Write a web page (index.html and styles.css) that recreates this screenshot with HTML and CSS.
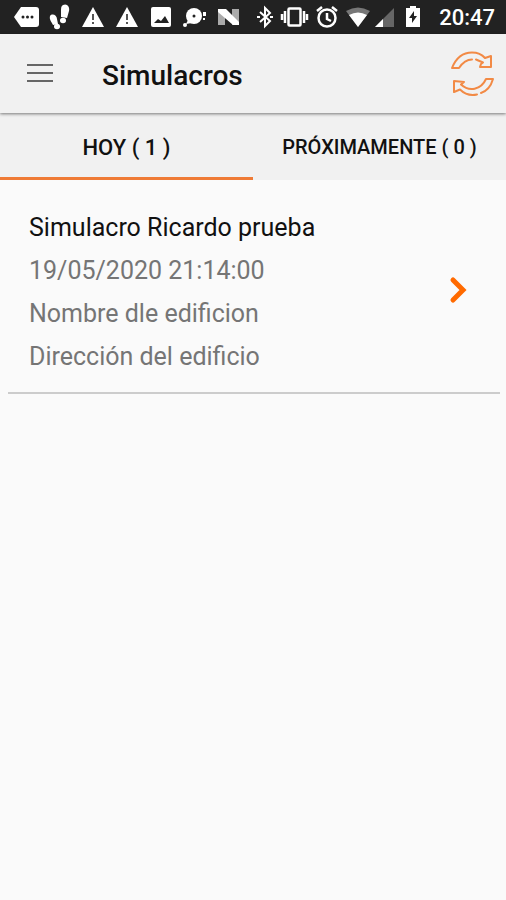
FILE: index.html
```html
<!DOCTYPE html>
<html lang="es">
<head>
    <meta charset="UTF-8">
    <meta name="viewport" content="width=device-width, initial-scale=1.0">
    <title>Simulacros</title>
    <link rel="stylesheet" href="styles.css">
</head>
<body>

    <div class="status-bar">
        <div class="notifications">
            <svg width="24" height="24" viewBox="0 0 24 24"><path d="M7 2h15q3 0 3 3v14q0 3-3 3H7L0 12z"/><g fill="#222"><circle cx="9" cy="12" r="1.500"/><circle cx="13.500" cy="12" r="1.500"/><circle cx="18" cy="12" r="1.500"/></g></svg>
            <svg width="24" height="24" viewBox="0 0 24 24"><path d="M2 11c2-3 7-1 7 3l1 5-5 1c-1-3-4-5-3-9z"/><ellipse cx="9" cy="21.500" rx="3" ry="2.700"/><path d="M15 0c4-2 7 2 6 6l-2 7-6-1V6c0-3 0-5 2-6z"/><ellipse cx="15" cy="15.500" rx="3" ry="2.700"/></svg>
            <svg width="24" height="24" viewBox="0 0 24 24"><path d="M11 2l11 20H0z"/><path d="M10 9h2v6h-2zM10 17h2v2h-2z" fill="#555"/></svg>
            <svg width="24" height="24" viewBox="0 0 24 24"><path d="M11 2l11 20H0z"/><path d="M10 9h2v6h-2zM10 17h2v2h-2z" fill="#555"/></svg>
            <svg width="24" height="24" viewBox="0 0 24 24"><rect x="1" y="2" width="20" height="20" rx="2"/><path d="M4 18l4-4 3 2 4-5 4 7z" fill="#222"/></svg>
            <svg width="24" height="24" viewBox="0 0 24 24"><circle cx="10" cy="11" r="8"/><circle cx="1" cy="20" r="2"/><path d="M2 19l2-4 4 3z"/><path d="M19 7h3v4h-3zM19 13h2v2h-2z"/><circle cx="10" cy="11" r="1.500" fill="#222"/></svg>
            <svg width="24" height="24" viewBox="0 0 24 24"><path d="M0 4h7v16H0zM14 4h7v16h-7z" fill="#aaa"/><path d="M0 4h8l13 13v3h-6L0 7z"/></svg>
        </div>
        <div class="system">
            <svg width="24" height="24" viewBox="0 0 24 24"><path d="M8 7l10 9-5 5V3l5 5-10 9" fill="none" stroke="#fff" stroke-width="2"/><path d="M5 11h3v2H5zM18 11h3v2h-3z"/></svg>
            <svg width="30" height="24" viewBox="0 0 30 24"><g fill="none" stroke="#fff" stroke-width="2.500"><rect x="8.500" y="3.500" width="12" height="17" rx="1"/><path d="M5 6v12M24 6v12M2 9v6M27 9v6"/></g></svg>
            <svg width="24" height="24" viewBox="0 0 24 24"><g fill="none" stroke="#fff" stroke-width="2.500"><circle cx="13" cy="13" r="8.500"/><path d="M13 8v6l4 2M3 6l5-4M23 6l-5-4"/></g></svg>
            <svg width="28" height="24" viewBox="0 0 28 24"><path d="M4 6q12-7 24 0L16 22z" fill="#777"/><path d="M7 10q9-5 18 0l-9 12z"/></svg>
            <svg width="22" height="24" viewBox="0 0 22 24"><path d="M20 3v19H1z" fill="#666"/><path d="M9 14v8H1z"/></svg>
            <svg width="24" height="24" viewBox="0 0 24 24"><path d="M10 1h6v2h4v19H6V3h4z"/><path d="M14 6l-5 7h3v5l5-7h-3z" fill="#222"/></svg>
            <time class="clock">20:47</time>
        </div>
    </div>

    <header class="toolbar">
        <button class="menu-btn" aria-label="Menú">
            <svg width="28" height="24" viewBox="0 0 28 24"><path d="M1 3h26M1 11h26M1 19h26" stroke="#666" stroke-width="2"/></svg>
        </button>
        <h1>Simulacros</h1>
        <button class="refresh-btn" aria-label="Actualizar">
            <svg width="44" height="46" viewBox="0 0 44 46" fill="none" stroke="#f28a45" stroke-width="2" stroke-linejoin="round" stroke-linecap="round">
                <path d="M21 8.500c-6 0-10 4-13 8.500H1C5 7 12 1.500 21 1.500c5 0 10 2 13 5.500l6-2v11H29l1-3 2-1.500-7-3"/>
                <path d="M26 43.500c-7 1.500-13-1-17-5L3 41V30l10 1-3 2.500C18 41 30 39 35 28h7c-2 7-6 12-12 14"/>
            </svg>
        </button>
    </header>

    <nav class="tabs">
        <button class="tab active">HOY ( 1 )</button>
        <button class="tab small">PRÓXIMAMENTE ( 0 )</button>
    </nav>

    <main>
        <a class="drill" href="#">
            <div class="drill-info">
                <h2>Simulacro Ricardo prueba</h2>
                <p>19/05/2020 21:14:00</p>
                <p>Nombre dle edificion</p>
                <p>Dirección del edificio</p>
            </div>
            <svg width="18" height="28" viewBox="0 0 18 28"><path d="M4 4l10 10L4 24" fill="none" stroke="#ff6a00" stroke-width="5" stroke-linecap="round"/></svg>
        </a>
    </main>

</body>
</html>
```
FILE: styles.css
```css
* {
    margin: 0;
    padding: 0;
    box-sizing: border-box;
    font-family: Roboto, "Liberation Sans", sans-serif;
}

body {
    background: #fafafa;
    color: #111;
}

button {
    background: none;
    border: none;
    cursor: pointer;
    color: inherit;
}

svg {
    display: block;
    flex-shrink: 0;
}

/* Barra de estado */
.status-bar {
    display: flex;
    justify-content: space-between;
    align-items: center;
    height: 34px;
    padding: 0 11px 0 14px;
    background: #222;
    color: #fff;
}

.status-bar svg {
    fill: #fff;
    overflow: visible;
}

.notifications {
    display: flex;
    gap: 10px;
}

.system {
    display: flex;
    align-items: center;
    gap: 4px;
}

.clock {
    margin-left: 11px;
    padding-top: 2px;
    font-size: 22px;
    font-weight: 500;
    line-height: 24px;
}

/* Cabecera */
.toolbar {
    position: relative;
    display: flex;
    align-items: center;
    height: 79px;
    padding: 0 11px 0 26px;
    background: #f1f1f1;
    box-shadow: 0 1px 3px rgba(0, 0, 0, 0.5);
}

.toolbar h1 {
    flex: 1;
    margin-left: 48px;
    padding-top: 4px;
    font-size: 28px;
    font-weight: 500;
    line-height: 32px;
}

/* Pestañas */
.tabs {
    display: grid;
    grid-template-columns: 1fr 1fr;
    background: #f1f1f1;
}

.tab {
    height: 67px;
    padding-top: 4px;
    border-bottom: 3px solid transparent;
    font-size: 22px;
    font-weight: 500;
}

.tab.active {
    border-bottom-color: #ef7b36;
}

.tab.small {
    font-size: 20px;
}

/* Lista */
.drill {
    display: flex;
    align-items: center;
    justify-content: space-between;
    margin: 0 6px 0 8px;
    padding: 22px 33px 14px 21px;
    border-bottom: 2px solid #ccc;
    color: #757575;
    text-decoration: none;
}

.drill-info {
    padding-top: 4px;
}

.drill h2,
.drill p {
    font-size: 25px;
    font-weight: 400;
    line-height: 43px;
}

.drill h2 {
    color: #111;
}
```
